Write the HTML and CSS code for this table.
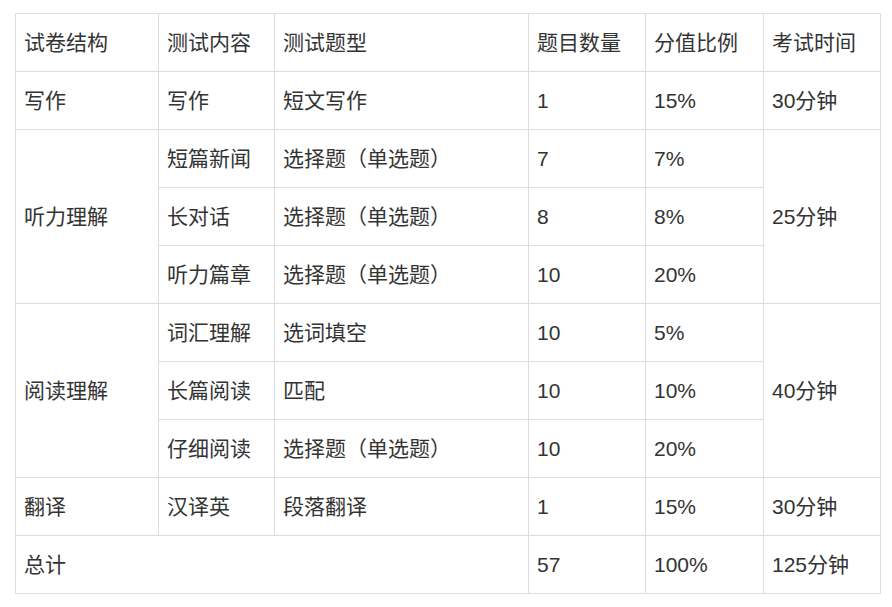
FILE: index.html
```html
<!DOCTYPE html>
<html lang="zh-CN">
<head>
<meta charset="utf-8">
<link rel="stylesheet" href="styles.css">
</head>
<body>
<div class="wrap">
<table class="exam">
  <colgroup>
    <col class="c1"><col class="c2"><col class="c3"><col class="c4"><col class="c5"><col class="c6">
  </colgroup>
  <tbody>
    <tr><td>试卷结构</td><td>测试内容</td><td>测试题型</td><td>题目数量</td><td>分值比例</td><td>考试时间</td></tr>
    <tr><td>写作</td><td>写作</td><td>短文写作</td><td>1</td><td>15%</td><td>30分钟</td></tr>
    <tr><td rowspan="3">听力理解</td><td>短篇新闻</td><td>选择题（单选题）</td><td>7</td><td>7%</td><td rowspan="3">25分钟</td></tr>
    <tr><td>长对话</td><td>选择题（单选题）</td><td>8</td><td>8%</td></tr>
    <tr><td>听力篇章</td><td>选择题（单选题）</td><td>10</td><td>20%</td></tr>
    <tr><td rowspan="3">阅读理解</td><td>词汇理解</td><td>选词填空</td><td>10</td><td>5%</td><td rowspan="3">40分钟</td></tr>
    <tr><td>长篇阅读</td><td>匹配</td><td>10</td><td>10%</td></tr>
    <tr><td>仔细阅读</td><td>选择题（单选题）</td><td>10</td><td>20%</td></tr>
    <tr><td>翻译</td><td>汉译英</td><td>段落翻译</td><td>1</td><td>15%</td><td>30分钟</td></tr>
    <tr><td colspan="3">总计</td><td>57</td><td>100%</td><td>125分钟</td></tr>
  </tbody>
</table>
</div>
</body>
</html>
```
FILE: styles.css
```css
html, body {
  margin: 0;
  padding: 0;
  background: #fff;
}
.wrap {
  padding: 13px 0 0 15px;
}
.exam {
  border-collapse: collapse;
  table-layout: fixed;
  width: 866px;
  font-family: "Liberation Sans", "Noto Sans CJK SC", sans-serif;
  font-size: 21px;
  color: #333;
}
.c1 { width: 143px; }
.c2 { width: 116px; }
.c3 { width: 254px; }
.c4 { width: 117px; }
.c5 { width: 118px; }
.c6 { width: 117px; }
.exam td {
  border: 1px solid #ddd;
  height: 57px;
  padding: 0 8px;
  vertical-align: middle;
  text-align: left;
  line-height: 1.2;
  white-space: nowrap;
}
```
